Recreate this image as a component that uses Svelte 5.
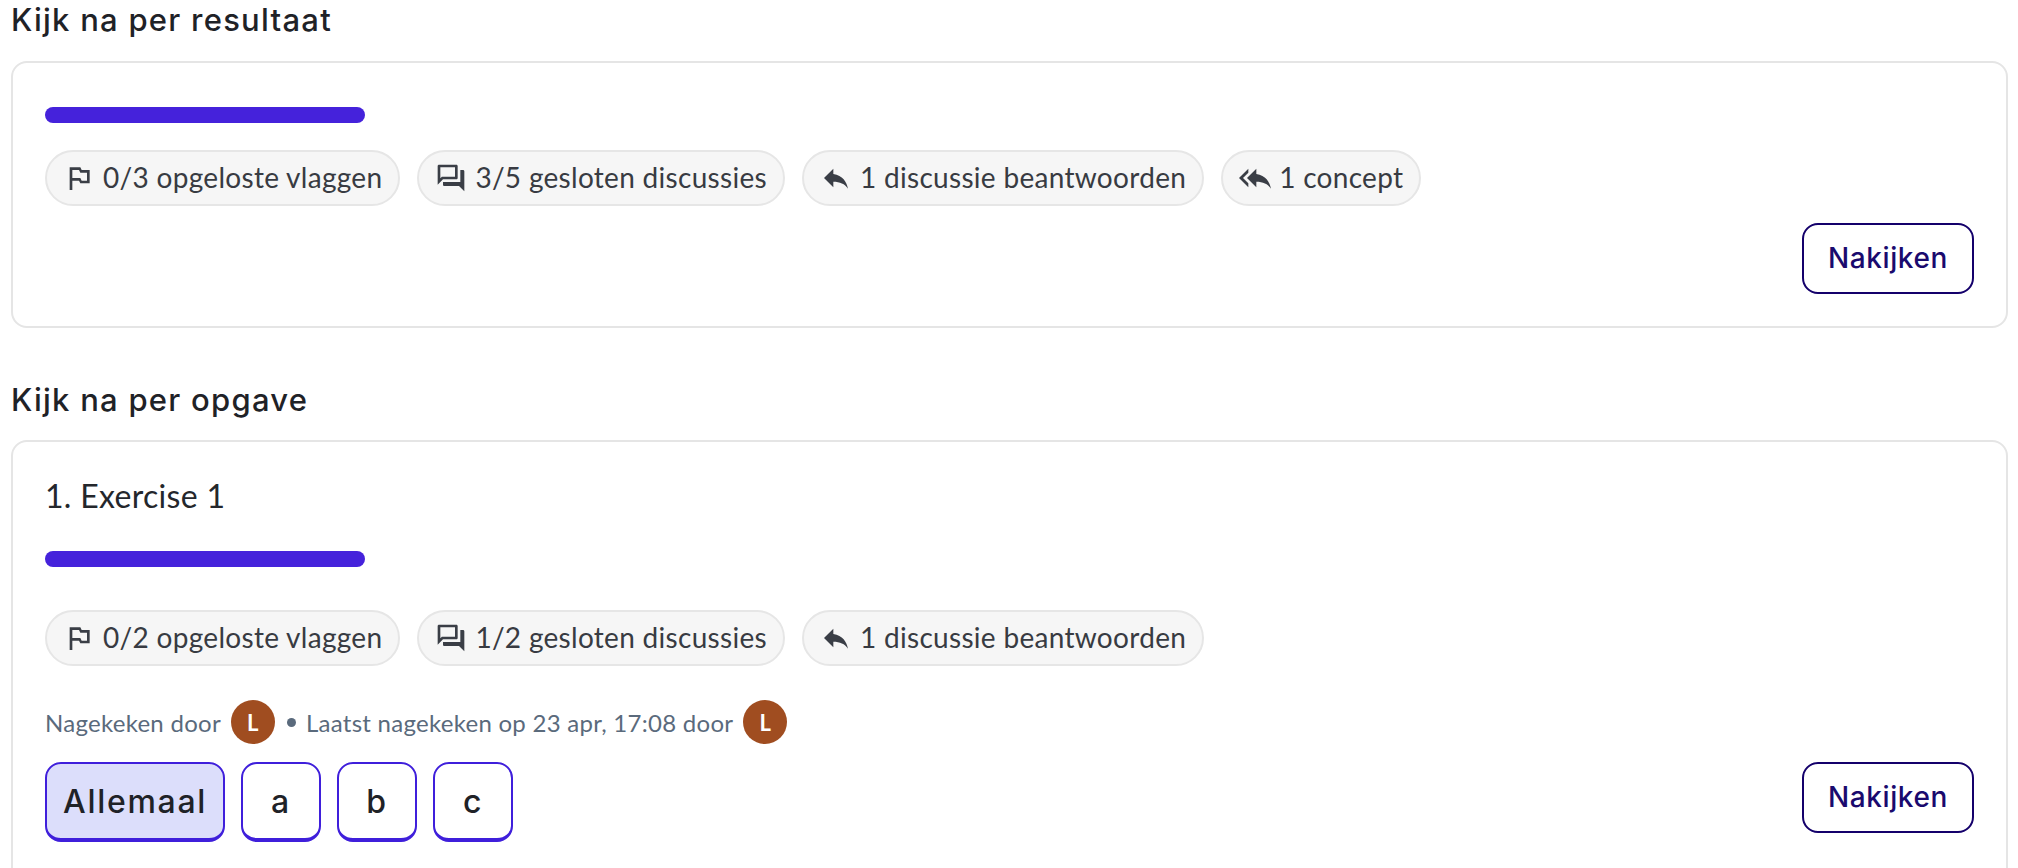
<script>
  const icons = {
    flag: 'M14 6l-1-2H5v17h2v-7h5l1 2h7V6h-6zm4 8h-4l-1-2H7V6h5l1 2h5v6z',
    chat: 'M15 4v7H5.17L4 12.17V4h11m1-2H3c-.55 0-1 .45-1 1v14l4-4h10c.55 0 1-.45 1-1V3c0-.55-.45-1-1-1zm5 4h-2v9H6v2c0 .55.45 1 1 1h11l4 4V7c0-.55-.45-1-1-1z',
    reply: 'M10 9V5l-7 7 7 7v-4.1c5 0 8.5 1.6 11 5.1-1-5-4-10-11-11z',
    replyAll: 'M7 8V5l-7 7 7 7v-3l-4-4 4-4zm6 1V5l-7 7 7 7v-4.1c5 0 8.5 1.6 11 5.1-1-5-4-10-11-11z'
  };
  const chips1 = [
    ['flag', '0/3 opgeloste vlaggen'],
    ['chat', '3/5 gesloten discussies'],
    ['reply', '1 discussie beantwoorden'],
    ['replyAll', '1 concept']
  ];
  const chips2 = [
    ['flag', '0/2 opgeloste vlaggen'],
    ['chat', '1/2 gesloten discussies'],
    ['reply', '1 discussie beantwoorden']
  ];
  const tabs = ['Allemaal', 'a', 'b', 'c'];
</script>

{#snippet chipRow(chips)}
  <div class="chips">
    {#each chips as [icon, label]}
      <span class="chip">
        <svg viewBox="0 0 24 24" class="icon"><path d={icons[icon]} /></svg>
        <span class="label">{label}</span>
      </span>
    {/each}
  </div>
{/snippet}

<main>
  <h2 class="first">Kijk na per resultaat</h2>
  <section class="card one">
    <div class="bar"></div>
    {@render chipRow(chips1)}
    <div class="action"><button class="review">Nakijken</button></div>
  </section>

  <h2 class="second">Kijk na per opgave</h2>
  <section class="card two">
    <div class="title">1. Exercise 1</div>
    <div class="bar"></div>
    {@render chipRow(chips2)}
    <div class="meta">
      <span>Nagekeken door</span>
      <span class="avatar">L</span>
      <span class="dot"></span>
      <span>Laatst nagekeken op 23 apr, 17:08 door</span>
      <span class="avatar">L</span>
    </div>
    <div class="foot">
      <div class="tabs">
        {#each tabs as t, i}
          <button class="tab" class:active={i === 0}>{t}</button>
        {/each}
      </div>
      <button class="review">Nakijken</button>
    </div>
  </section>
</main>

<style>
  :global(body) { margin: 0; background: #fff; }
  main {
    height: 868px;
    overflow: hidden;
    box-sizing: border-box;
    padding: 0 10px 0 11px;
    font-family: "Lato", "Noto Sans", sans-serif;
    color: #24272c;
  }
  h2 {
    margin: 0;
    font-family: "Inter", sans-serif;
    font-weight: 500;
    font-size: 31px;
    letter-spacing: 1.25px;
    line-height: 40px;
    color: #1f2227;
  }
  h2.first { margin-bottom: 21px; }
  h2.second { margin-top: 52px; margin-bottom: 20px; }
  .card {
    box-sizing: border-box;
    border: 2px solid #e5e5e5;
    border-radius: 16px;
    padding: 0 32px 32px;
    background: #fff;
  }
  .card.one { padding-top: 44px; }
  .card.two { padding-top: 34px; height: 600px; }
  .title { font-size: 32px; line-height: 40px; letter-spacing: 0.3px; margin-bottom: 35px; }
  .bar { width: 320px; height: 16px; border-radius: 8px; background: #4522db; }
  .chips { display: flex; gap: 17px; margin-top: 27px; }
  .card.two .chips { margin-top: 43px; }
  .chip {
    box-sizing: border-box;
    display: flex;
    align-items: center;
    gap: 8px;
    height: 56px;
    padding: 0 16px;
    border: 2px solid #e6e6e6;
    border-radius: 28px;
    background: #f6f6f6;
    font-size: 28px;
    letter-spacing: 0.3px;
    color: #383b42;
    white-space: nowrap;
  }
  .label { padding-bottom: 2px; }
  .icon { width: 32px; height: 32px; fill: #3a3e46; flex: none; }
  .action { display: flex; justify-content: flex-end; margin-top: 17px; }
  .review {
    box-sizing: border-box;
    width: 172px;
    height: 71px;
    border: 2px solid #14006b;
    border-radius: 16px;
    background: #fff;
    color: #1a0a6e;
    font-family: "Inter", sans-serif;
    font-weight: 500;
    font-size: 28px;
    letter-spacing: 0.6px;
    padding: 0 0 2px;
  }
  .meta {
    display: flex;
    align-items: center;
    gap: 10px;
    margin-top: 34px;
    font-size: 24px;
    letter-spacing: 0.27px;
    color: #5a6a7c;
  }
  .avatar {
    width: 44px;
    height: 44px;
    border-radius: 50%;
    background: #a04d20;
    color: #fff;
    font-weight: 700;
    font-size: 22px;
    display: flex;
    align-items: center;
    justify-content: center;
  }
  .dot { width: 9px; height: 9px; border-radius: 50%; background: #5a6a7c; margin: 0 0 0 2px; }
  .foot { display: flex; justify-content: space-between; align-items: flex-start; margin-top: 18px; }
  .tabs { display: flex; gap: 16px; }
  .tab {
    box-sizing: border-box;
    min-width: 80px;
    height: 80px;
    padding: 0 16px;
    border: 2px solid #3f1fdb;
    border-bottom-width: 4px;
    border-radius: 16px;
    background: #fff;
    font-family: "Inter", sans-serif;
    font-weight: 500;
    font-size: 32px;
    letter-spacing: 1.7px;
    color: #1f2227;
  }
  .tab.active { background: #dcdefb; }
</style>
